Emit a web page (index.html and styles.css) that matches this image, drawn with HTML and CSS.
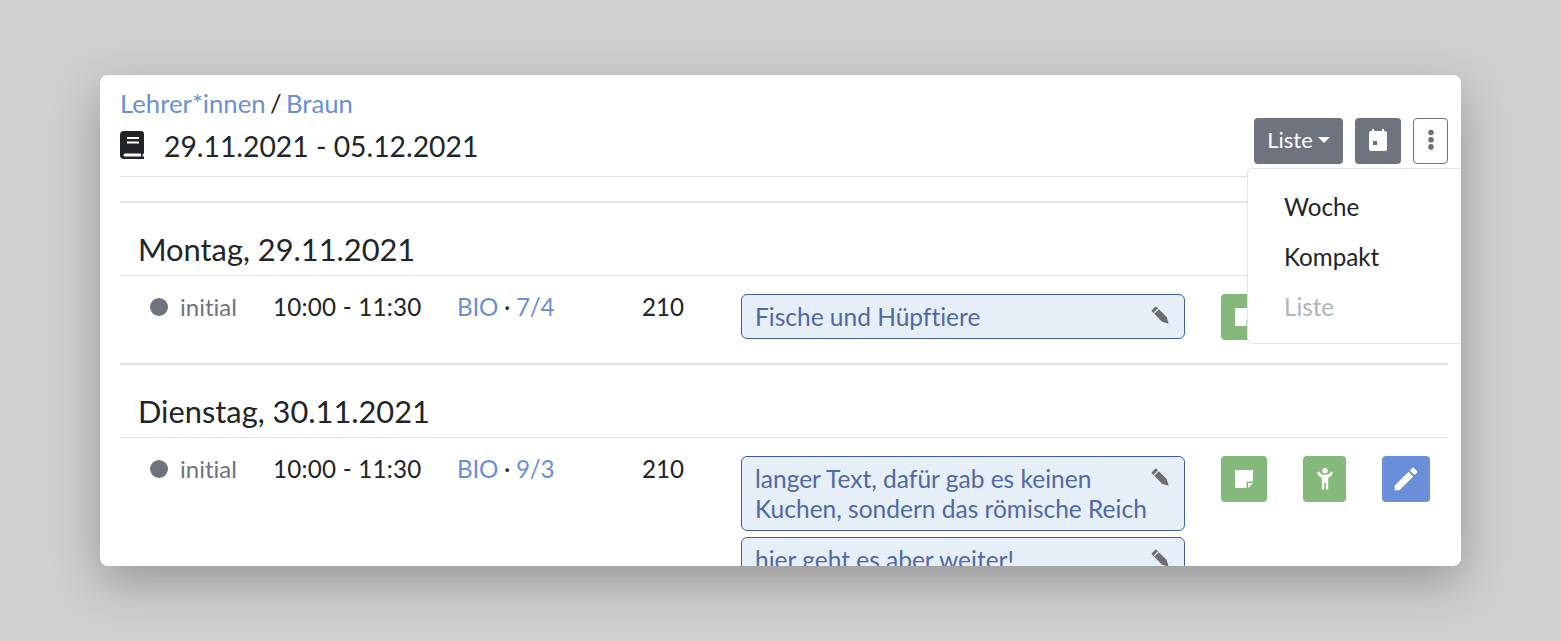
FILE: index.html
```html
<!DOCTYPE html>
<html lang="de">
<head>
<meta charset="utf-8">
<title>Lehrer*innen / Braun</title>
<link rel="stylesheet" href="styles.css">
</head>
<body>
<main class="card">
  <div class="crumbs"><a class="link">Lehrer*innen</a> / <a class="link">Braun</a></div>
  <header class="title-row">
    <h1 class="title">
      <svg class="book" viewBox="0 0 24 28"><path fill="#212529" fill-rule="evenodd" d="M4 0H21A3 3 0 0 1 24 3V22A2 2 0 0 1 22.5 23.6V25.5H24V28H4A4 4 0 0 1 0 24V4A4 4 0 0 1 4 0ZM7 6V8H19V6ZM7 10.5V12.5H19V10.5ZM5 22.5A1.5 1.5 0 0 0 5 25.5H21V22.5Z"/></svg>
      <span>29.11.2021 - 05.12.2021</span>
    </h1>
    <div class="actions">
      <button class="btn btn-grey btn-liste">Liste<i class="caret"></i></button>
      <button class="btn btn-grey btn-cal"><svg class="ico" viewBox="0 0 24 24"><path fill="#fff" fill-rule="evenodd" d="M6 0H8V2H16V0H18V2H19A2 2 0 0 1 21 4V20A2 2 0 0 1 19 22H5A2 2 0 0 1 3 20V4A2 2 0 0 1 5 2H6ZM7 12V16H11V12Z"/></svg></button>
      <button class="btn btn-outline"><svg class="ico" viewBox="0 0 24 24"><path fill="#6c727c" d="M12 0.7A2.8 2.8 0 1 1 12 6.3A2.8 2.8 0 0 1 12 0.7ZM12 7.9A2.8 2.8 0 1 1 12 13.5A2.8 2.8 0 0 1 12 7.9ZM12 15.1A2.8 2.8 0 1 1 12 20.7A2.8 2.8 0 0 1 12 15.1Z"/></svg></button>
    </div>
  </header>
  <hr class="rule-top">

  <section class="day">
    <h2 class="day-name">Montag, 29.11.2021</h2>
    <div class="row">
      <div class="status"><i class="dot"></i>initial</div>
      <div class="time">10:00 - 11:30</div>
      <div class="subject"><a class="link">BIO</a> · <a class="link">7/4</a></div>
      <div class="room">210</div>
      <div class="notes">
        <div class="note">Fische und Hüpftiere<svg class="pen" viewBox="0 0 24 24"><path d="M2.2 6.2L6.2 2.2Q7 1.5 7.8 2.2L9.6 4L4 9.6L2.2 7.8Q1.5 7 2.2 6.2ZM5 10.6L10.6 5L20 14.4L22.5 22.5L14.4 20Z"/></svg></div>
      </div>
      <div class="tools">
        <button class="tool tool-green"><svg class="ico" viewBox="0 0 24 24"><path fill="#fff" fill-rule="evenodd" d="M3 3H21V14.5H14.5V21H3ZM16 16H21L16 21Z"/></svg></button>
        <button class="tool tool-green tool-narrow"><svg class="ico" viewBox="0 0 24 24"><path fill="#fff" d="M4 5.5L6 4.2C6.8 6.6 9 8 12 8C15 8 17.2 6.6 18 4.2L20 5.5C19.2 8 17.4 10 15.2 11V22.5H12.8V16H11.2V22.5H8.8V11C6.6 10 4.8 8 4 5.5ZM12 1A2.7 2.7 0 1 0 12 6.4A2.7 2.7 0 1 0 12 1Z"/></svg></button>
        <button class="tool tool-blue"><svg class="ico ico-large" viewBox="0 0 24 24"><path fill="#fff" d="M20.71 7.04C21.1 6.65 21.1 6 20.71 5.63L18.37 3.29C18 2.9 17.35 2.9 16.96 3.29L15.12 5.12L18.87 8.87M3 17.25V21H6.75L17.81 9.93L14.06 6.18L3 17.25Z"/></svg></button>
      </div>
    </div>
  </section>

  <section class="day">
    <h2 class="day-name">Dienstag, 30.11.2021</h2>
    <div class="row">
      <div class="status"><i class="dot"></i>initial</div>
      <div class="time">10:00 - 11:30</div>
      <div class="subject"><a class="link">BIO</a> · <a class="link">9/3</a></div>
      <div class="room">210</div>
      <div class="notes">
        <div class="note">langer Text, dafür gab es keinen Kuchen, sondern das römische Reich<svg class="pen" viewBox="0 0 24 24"><path d="M2.2 6.2L6.2 2.2Q7 1.5 7.8 2.2L9.6 4L4 9.6L2.2 7.8Q1.5 7 2.2 6.2ZM5 10.6L10.6 5L20 14.4L22.5 22.5L14.4 20Z"/></svg></div>
        <div class="note">hier geht es aber weiter!<svg class="pen" viewBox="0 0 24 24"><path d="M2.2 6.2L6.2 2.2Q7 1.5 7.8 2.2L9.6 4L4 9.6L2.2 7.8Q1.5 7 2.2 6.2ZM5 10.6L10.6 5L20 14.4L22.5 22.5L14.4 20Z"/></svg></div>
      </div>
      <div class="tools">
        <button class="tool tool-green"><svg class="ico" viewBox="0 0 24 24"><path fill="#fff" fill-rule="evenodd" d="M3 3H21V14.5H14.5V21H3ZM16 16H21L16 21Z"/></svg></button>
        <button class="tool tool-green tool-narrow"><svg class="ico" viewBox="0 0 24 24"><path fill="#fff" d="M4 5.5L6 4.2C6.8 6.6 9 8 12 8C15 8 17.2 6.6 18 4.2L20 5.5C19.2 8 17.4 10 15.2 11V22.5H12.8V16H11.2V22.5H8.8V11C6.6 10 4.8 8 4 5.5ZM12 1A2.7 2.7 0 1 0 12 6.4A2.7 2.7 0 1 0 12 1Z"/></svg></button>
        <button class="tool tool-blue"><svg class="ico ico-large" viewBox="0 0 24 24"><path fill="#fff" d="M20.71 7.04C21.1 6.65 21.1 6 20.71 5.63L18.37 3.29C18 2.9 17.35 2.9 16.96 3.29L15.12 5.12L18.87 8.87M3 17.25V21H6.75L17.81 9.93L14.06 6.18L3 17.25Z"/></svg></button>
      </div>
    </div>
  </section>

  <nav class="menu">
    <a class="menu-item">Woche</a>
    <a class="menu-item">Kompakt</a>
    <a class="menu-item menu-off">Liste</a>
  </nav>
</main>
</body>
</html>
```
FILE: styles.css
```css
* { box-sizing: border-box; }
html, body { height: 100%; }
body {
  margin: 0;
  padding: 75px 100px;
  background: #d0d0d0;
  overflow: hidden;
  font-family: "Lato", "Noto Sans", sans-serif;
  font-size: 24.2px;
  line-height: 30px;
  color: #212529;
  font-variant-ligatures: none;
}
.card {
  position: relative;
  height: 491px;
  overflow: hidden;
  background: #fff;
  border-radius: 8px;
  padding: 13px 13px 0 20px;
  box-shadow: 0 16px 48px rgba(0, 0, 0, .28);
}
.link { color: #6a8fd8; }
.crumbs { height: 30px; line-height: 30px; font-size: 25.7px; word-spacing: -2.2px; }
.title-row { display: flex; justify-content: space-between; align-items: flex-start; height: 58px; }
.title { display: flex; align-items: center; gap: 20px; margin: 11px 0 0; font-size: 28.3px; font-weight: 400; line-height: 34px; }
.book { width: 24px; height: 28px; margin-top: -2px; }
.actions { display: flex; align-items: flex-start; }
.btn { display: flex; align-items: center; justify-content: center; height: 46px; border: 0; padding: 0; border-radius: 4px; font: inherit; color: #fff; }
.btn-grey { background: #6e737d; }
.btn-liste { width: 89px; margin-right: 12px; font-size: 22px; gap: 5px; padding-bottom: 2px; }
.btn-cal { width: 46px; margin-right: 12px; }
.btn-outline { width: 35px; background: #fff; border: 1px solid #6e737d; }
.caret { width: 0; height: 0; border: 6.5px solid transparent; border-top-color: #fff; border-bottom: 0; }
.ico { width: 24px; height: 24px; }
.ico-large { width: 30px; height: 30px; }
.rule-top { margin: 0 0 24px; border: 0; border-top: 1px solid #e3e3e3; height: 0; }
.day { border-top: 2px solid #e2e3e5; padding-top: 30px; }
.day-name { margin: 0; height: 43px; padding-left: 18px; font-size: 30.8px; font-weight: 400; line-height: 34px; border-bottom: 1px solid #e3e3e3; }
.row { display: grid; grid-template-columns: 153px 184px 185px 99px 444px 1fr; height: 87px; padding-top: 18px; align-items: start; }
.status, .time, .subject, .room { line-height: 26px; }
.time { letter-spacing: .22px; }
.subject { letter-spacing: -.25px; }
.status { display: flex; align-items: center; gap: 12px; padding-left: 30px; color: #6e737d; font-size: 24px; }
.dot { width: 18px; height: 18px; border-radius: 50%; background: #6e737d; }
.notes { display: flex; flex-direction: column; gap: 6px; }
.note { position: relative; padding: 7px 37px 6px 13px; border: 1px solid #3f5f9f; border-radius: 6px; background: #e6eef8; color: #5069a5; line-height: 30px; font-size: 24.5px; }
.pen { position: absolute; top: 10px; right: 14px; width: 20px; height: 20px; fill: #6e6e6e; }
.tools { display: flex; align-items: flex-start; padding-left: 36px; }
.tool { display: flex; align-items: center; justify-content: center; height: 46px; border: 0; padding: 0; border-radius: 4px; width: 46px; margin-right: 36px; }
.tool-narrow { width: 43px; }
.tool-green { background: #84b97b; }
.tool-blue { background: #6a8fd8; width: 48px; }
.menu { position: absolute; top: 93px; left: 1147px; width: 230px; height: 176px; padding: 13px 0; background: #fff; border: 1px solid #e3e3e3; border-radius: 6px; }
.menu-item { display: block; height: 50px; padding: 10px 0 0 36px; line-height: 30px; color: #212529; }
.menu-off { color: #adb5bd; }
```
